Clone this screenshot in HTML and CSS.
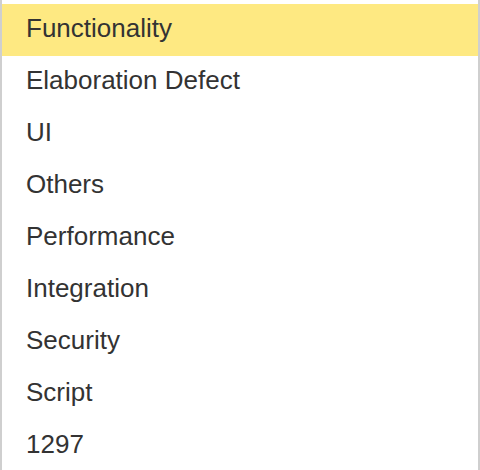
FILE: index.html
```html
<!DOCTYPE html>
<html>
<head>
<meta charset="utf-8">
<link rel="stylesheet" href="styles.css">
</head>
<body>
<ul class="menu">
  <li class="item active">Functionality</li>
  <li class="item">Elaboration Defect</li>
  <li class="item">UI</li>
  <li class="item">Others</li>
  <li class="item">Performance</li>
  <li class="item">Integration</li>
  <li class="item">Security</li>
  <li class="item">Script</li>
  <li class="item">1297</li>
</ul>
</body>
</html>
```
FILE: styles.css
```css
html, body {
  margin: 0;
  padding: 0;
  background: #fff;
  overflow: hidden;
  height: 470px;
}
.menu {
  list-style: none;
  margin: 0;
  padding: 4px 0 0 0;
  border-left: 2px solid #cfcfcf;
  border-right: 2px solid #cfcfcf;
  font-family: "Liberation Sans", Arial, sans-serif;
  font-size: 26px;
  color: #333;
}
.item {
  height: 52px;
  line-height: 48px;
  padding-left: 24px;
  white-space: nowrap;
}
.active {
  background: #fee982;
}
```
